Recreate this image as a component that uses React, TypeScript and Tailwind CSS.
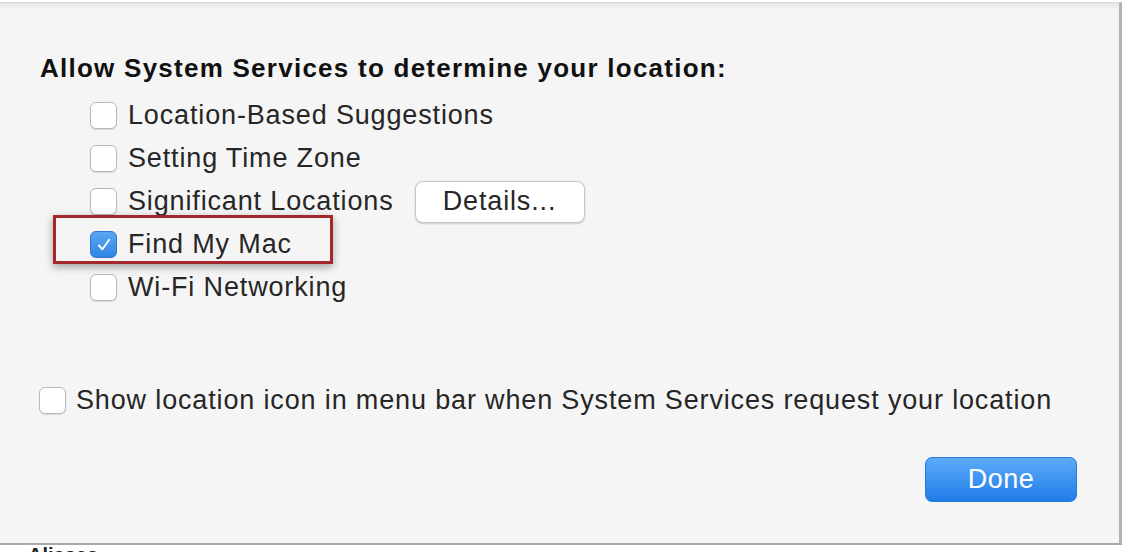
import React from "react";

const font = { fontFamily: '"Liberation Sans", Arial, sans-serif' };

function Box({ checked = false }: { checked?: boolean }) {
  if (checked) {
    return (
      <div className="w-[27px] h-[27px] rounded-[6px] bg-gradient-to-b from-[#5aa6f2] to-[#2f86e6] border border-[#2a78d0] flex items-center justify-center shrink-0">
        <svg width="18" height="18" viewBox="0 0 18 18">
          <path d="M4 9.5 L7.4 13.3 L14.2 3.8" fill="none" stroke="white" strokeWidth="1.9" strokeLinecap="round" strokeLinejoin="round" />
        </svg>
      </div>
    );
  }
  return (
    <div className="w-[27px] h-[27px] rounded-[6px] bg-white border border-[#b9b9b9] shadow-[0_1px_1px_rgba(0,0,0,0.12)] shrink-0" />
  );
}

function Row({ label, checked, children }: { label: string; checked?: boolean; children?: React.ReactNode }) {
  return (
    <div className="flex items-center h-[43px]">
      <Box checked={checked} />
      <span className="ml-[11px] text-[27px] tracking-[0.85px] text-[#262626] leading-none">{label}</span>
      {children}
    </div>
  );
}

export default function App() {
  return (
    <div className="w-[1132px] h-[552px] bg-white relative overflow-hidden" style={font}>
      <div className="w-[1122px] h-[543px] mt-[2px] bg-[#f5f5f5] border-t border-t-[#d9d9d9] border-r-[3px] border-r-[#b3b3b3] border-b-2 border-b-[#a9a9a9] bg-gradient-to-b from-[#e6e6e6] via-[#f5f5f5] to-[#f5f5f5] bg-[length:100%_14px] bg-no-repeat">
        <div className="pt-[50px] pl-[40px]">
          <div className="text-[26px] font-bold tracking-[1.25px] text-[#111] leading-[30px]">
            Allow System Services to determine your location:
          </div>
          <div className="pl-[50px] mt-[11px] flex flex-col">
            <Row label="Location-Based Suggestions" />
            <Row label="Setting Time Zone" />
            <Row label="Significant Locations">
              <button className="ml-[21px] w-[170px] h-[42px] bg-white rounded-[8px] border border-[#c4c4c4] shadow-[0_1px_2px_rgba(0,0,0,0.18)] text-[27px] tracking-[0.85px] text-[#262626] leading-none" style={font}>
                Details...
              </button>
            </Row>
            <div className="relative">
              <div className="absolute left-[-37px] top-[-8px] w-[280px] h-[49px] border-[3px] border-[#a3282b] shadow-[0_3px_8px_rgba(0,0,0,0.35)]" />
              <Row label="Find My Mac" checked />
            </div>
            <Row label="Wi-Fi Networking" />
          </div>
          <div className="flex items-center mt-[78px] ml-[-1px]">
            <Box />
            <span className="ml-[10px] text-[27px] tracking-[0.85px] text-[#262626] leading-none whitespace-nowrap">
              Show location icon in menu bar when System Services request your location
            </span>
          </div>
          <div className="flex justify-end pr-[42px] mt-[43px]">
            <button className="w-[152px] h-[45px] rounded-[7px] bg-gradient-to-b from-[#5aabf7] to-[#1f7ce8] border border-[#2a7ad8] text-white text-[27px] tracking-[0.5px] leading-none" style={font}>
              Done
            </button>
          </div>
        </div>
      </div>
      <div className="absolute left-[28px] top-[546px] h-[6px] overflow-hidden text-[20px] font-bold text-[#222] leading-[20px]">
        <div className="mt-[-1px]">Aliases</div>
      </div>
    </div>
  );
}
